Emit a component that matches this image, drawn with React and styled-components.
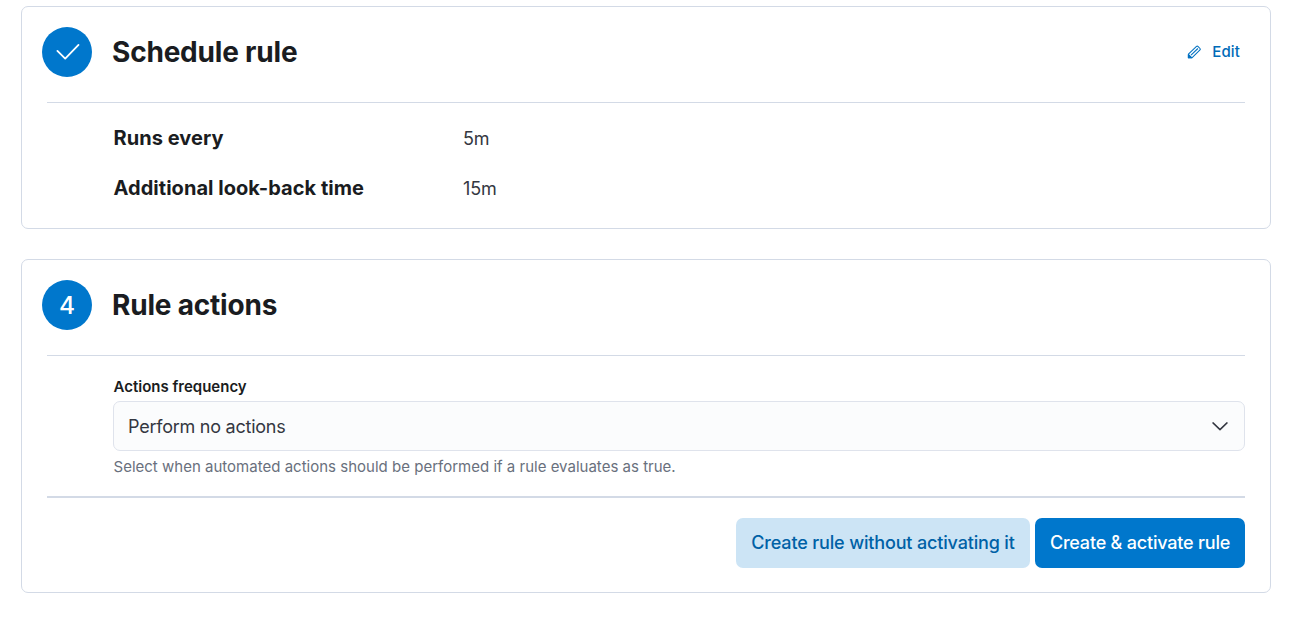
import React from 'react';
import styled, { createGlobalStyle } from 'styled-components';

const Global = createGlobalStyle`
  *, *::before, *::after { box-sizing: border-box; }
  body { margin: 0; background: #fff; color: #343741; font-family: Inter, "Liberation Sans", sans-serif; }
  h2, p, dl, dt, dd { margin: 0; }
`;
const Page = styled.main`
  display: flex; flex-direction: column; gap: 30px;
  padding: 6px 21px 24px; height: 617px;
`;
const Panel = styled.section`
  height: ${p => p.$height}px; padding: 20px;
  border: 1px solid #d3dae6; border-radius: 7px; background: #fff;
`;
const Header = styled.header`
  display: flex; align-items: center; height: 50px;
`;
const StepBadge = styled.span`
  display: flex; align-items: center; justify-content: center;
  width: 50px; height: 50px; border-radius: 50%; margin-right: 20px;
  background: #0077cc; color: #fff; font-size: 24.5px; line-height: 48px; font-weight: 500;
`;
const Title = styled.h2`
  font-size: 28px; font-weight: 700; line-height: 40px; color: #1a1c21; letter-spacing: -0.2px;
`;
const EditLink = styled.button`
  display: flex; align-items: center; gap: 10px; margin: 0 10px 0 auto; padding: 0;
  border: 0; background: none; color: #006bb8; font: 500 15px/20px Inter, sans-serif; letter-spacing: 0.15px;
`;
const Rule = styled.hr`
  height: ${p => p.$height || 1}px; border: 0; background: #d3dae6; margin: ${p => p.$top}px 5px 0;
`;
const Details = styled.dl`
  display: grid; grid-template-columns: 349.5px 1fr; grid-auto-rows: 50px;
  align-items: center; margin: 10px 5px 0 71.5px;
`;
const Term = styled.dt`font-size: 20px; line-height: 30px; font-weight: 700; color: #1a1c21; letter-spacing: 0.04px;`;
const Value = styled.dd`font-size: 18px; line-height: 30px; padding-top: 1px; color: #343741; letter-spacing: -0.1px;`;
const Field = styled.div`display: flex; flex-direction: column; margin: 21px 5px 0 71px;`;
const Label = styled.label`font-size: 15px; line-height: 20px; font-weight: 600; color: #1a1c21; padding-left: 0.5px;`;
const Select = styled.button`
  display: flex; align-items: center; justify-content: space-between;
  height: 50px; margin-top: 4px; padding: 1px 14px 0 14px;
  border: 1px solid #dfe3ec; border-radius: 7px; background: #fbfcfd; color: #343741;
  font: 400 18px/26px Inter, sans-serif; letter-spacing: -0.24px;
`;
const Help = styled.p`font-size: 15px; line-height: 20px; margin-top: 6px; color: #69707d; padding-left: 0.5px; letter-spacing: 0.01px;`;
const Actions = styled.footer`display: flex; justify-content: flex-end; gap: 5px; margin: 20px 5px 0;`;
const Button = styled.button`
  width: ${p => p.$width}px; height: 50px; padding: 0 0 1px; border: 0; border-radius: 7px; white-space: nowrap;
  font: 500 18px/25px Inter, sans-serif; letter-spacing: ${p => p.$primary ? -0.2 : -0.16}px;
  background: ${p => p.$primary ? '#0077cc' : '#cce4f5'};
  color: ${p => p.$primary ? '#fff' : '#0061a6'};
`;

const Check = () => (
  <svg width="26" height="26" viewBox="0 0 26 26" fill="none" stroke="#fff" strokeWidth="1.8" strokeLinecap="round" strokeLinejoin="round">
    <path d="M3.4 11.9L11.2 19.6L24.5 5.9" />
  </svg>
);
const Pencil = () => (
  <svg width="15" height="15" viewBox="0 0 15 15" fill="none" stroke="#0071c2" strokeWidth="1.05" strokeLinejoin="round">
    <path d="M1.4 9.2L9.5 1.4Q10.2 0.8 10.9 1.4L13 3.5Q13.7 4.2 13 4.9L4.9 12.8H1.4Z" />
    <path d="M4 10.2L10.9 3.5" />
    <path d="M1.4 9.3L4.9 12.8" />
    <path d="M1.4 9.8L4.4 12.8H1.4Z" fill="#0071c2" />
  </svg>
);
const Chevron = () => (
  <svg width="20" height="20" viewBox="0 0 20 20" fill="none" stroke="#343741" strokeWidth="1.5" strokeLinecap="round" strokeLinejoin="round">
    <path d="M3 5.9L10 12.6L17 5.9" />
  </svg>
);

export default function App() {
  return <><Global /><Page>
    <Panel $height={223}>
      <Header><StepBadge><Check /></StepBadge><Title>Schedule rule</Title><EditLink><Pencil />Edit</EditLink></Header>
      <Rule $top={25} />
      <Details><Term>Runs every</Term><Value>5m</Value><Term>Additional look-back time</Term><Value>15m</Value></Details>
    </Panel>
    <Panel $height={334}>
      <Header><StepBadge>4</StepBadge><Title>Rule actions</Title></Header>
      <Rule $top={25} />
      <Field><Label>Actions frequency</Label><Select>Perform no actions<Chevron /></Select><Help>Select when automated actions should be performed if a rule evaluates as true.</Help></Field>
      <Rule $top={19} $height={2} />
      <Actions><Button $width={294}>Create rule without activating it</Button><Button $primary $width={210}>Create &amp; activate rule</Button></Actions>
    </Panel>
  </Page></>;
}
